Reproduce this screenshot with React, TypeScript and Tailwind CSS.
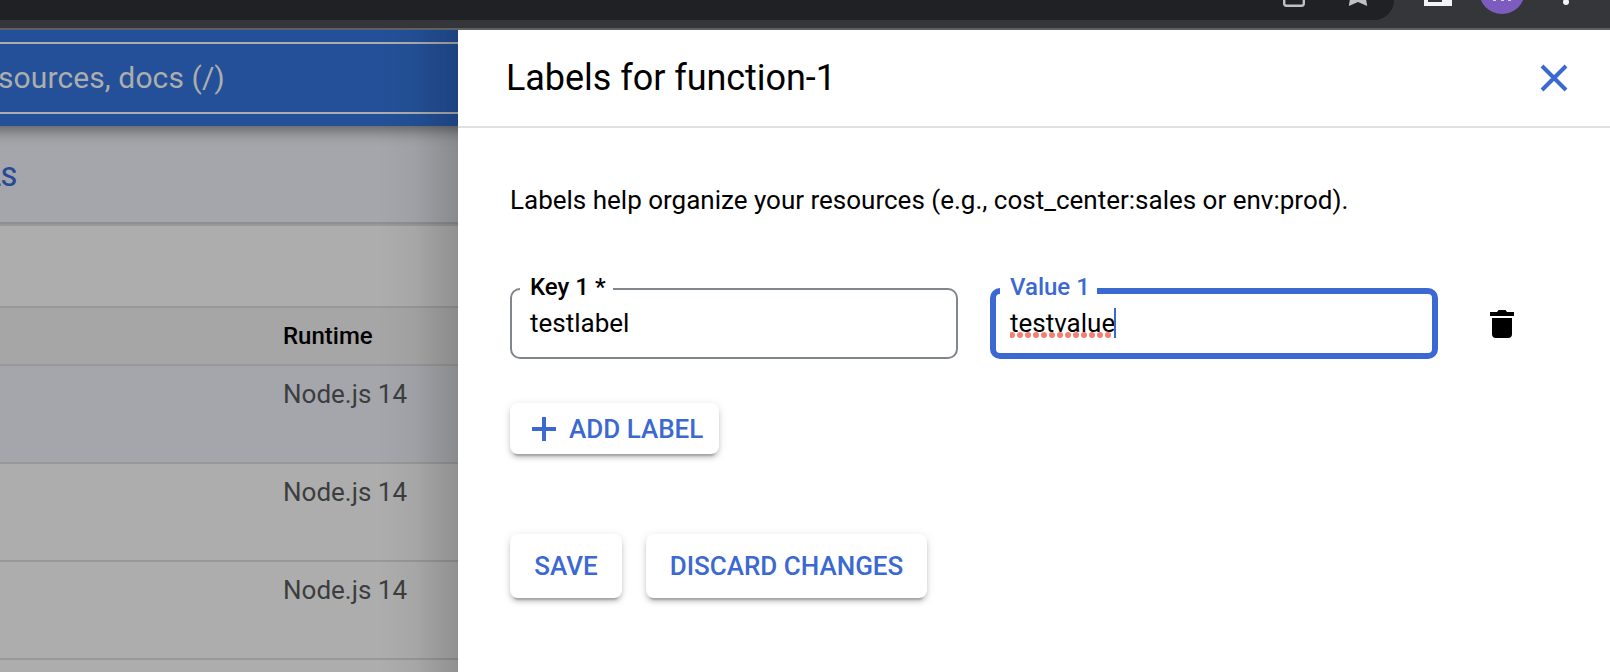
function BrowserBar() {
  return (
    <div className="flex h-[30px] shrink-0 border-b-2 border-[#5f6064] bg-[#35363a]">
      <div className="flex h-5 w-[1394px] rounded-br-[26px] bg-[#202124]" />
      <svg className="absolute left-[1270px] top-0" width="340" height="28" viewBox="1270 0 340 28">
        <path d="M1284.2 -4V3.5q0 2.2 2.2 2.2h15.2q2.2 0 2.2-2.2V-4" fill="none" stroke="#bdc1c6" strokeWidth="2.4" />
        <path d="M1350.5 -4L1348.8 6L1358 2L1367.2 6L1365.5 -4Z" fill="#bdc1c6" />
        <path d="M1424 0H1452V6H1424Z" fill="#f1f3f4" />
        <path d="M1428 0H1442V2H1428Z" fill="#35363a" />
        <circle cx="1502" cy="-9" r="23" fill="#7c5cbf" />
        <path d="M1493 0h3v1h-3zM1501 0h3v1h-3zM1508 0h3v1h-3z" fill="#d9cdee" />
        <circle cx="1566" cy="2" r="3" fill="#f1f3f4" />
      </svg>
    </div>
  );
}

function RuntimeRow({ selected }: { selected?: boolean }) {
  return (
    <div className={`h-[98px] shrink-0 border-b-2 border-[#989898] pl-[283px] pt-[10px] text-[26px] leading-[36px] text-[#3c3d3e] ${selected ? "bg-[#a4a6ab]" : "bg-[#adadad]"}`}>
      Node.js 14
    </div>
  );
}

function Background() {
  return (
    <div className="relative flex w-[458px] shrink-0 flex-col overflow-hidden whitespace-nowrap bg-[#adadad]">
      <div className="relative -mx-6 h-24 shrink-0 bg-[#235098] py-3 shadow-[0_0_14px_4px_rgba(0,0,0,0.45)]">
        <div className="flex h-[72px] items-center border-y-2 border-[#adadad]">
          <span className="ml-[22px] pb-[2px] text-[30px] tracking-[0.1px] text-[#adadad]">sources, docs (/)</span>
        </div>
      </div>
      <div className="flex h-24 shrink-0 items-center bg-[#a4a6ab]">
        <span className="-ml-[13px] pt-[6px] text-[26px] font-medium text-[#284a94]">LS</span>
      </div>
      <div className="h-1 shrink-0 border-t-2 border-[#8e8f93] bg-[#989898]" />
      <div className="h-[82px] shrink-0 border-b-2 border-[#989898]" />
      <div className="h-[58px] shrink-0 border-b-2 border-[#989898] bg-[#a6a6a6] pl-[283px] text-[24px] font-medium leading-[56px] text-black">Runtime</div>
      <RuntimeRow selected />
      <RuntimeRow />
      <RuntimeRow />
      <div className="absolute inset-y-0 right-0 w-20 bg-[linear-gradient(to_right,transparent,rgba(0,0,0,0.035)_45%,rgba(0,0,0,0.17))]" />
    </div>
  );
}

function Field({ label, value, focused }: { label: string; value: string; focused?: boolean }) {
  return (
    <div
      className={`relative h-[71px] w-[448px] rounded-[10px] ${focused ? "border-[6px] border-[#3c69d1] pl-[14px] pt-[9px]" : "border-2 border-[#80868b] pl-[18px] pt-[13px]"}`}
    >
      <span
        className={`absolute bg-white text-[24px] font-medium leading-[28px] ${focused ? "-top-[21px] left-1 w-[97px] pl-[10px] text-[#3c69d1]" : "-top-[17px] left-2 w-[93px] pl-[10px] text-black"}`}
      >
        {label}
      </span>
      <div className="relative flex h-[40px] items-center text-[26px] leading-[40px] text-black">
        {focused && (
          <svg className="absolute left-0 top-[29px]" width="104" height="6" viewBox="0 0 104 6">
            <path d="M2 3H104" stroke="#f28072" strokeWidth="6" strokeLinecap="round" strokeDasharray="0 8" />
          </svg>
        )}
        <span className="relative">{value}</span>
        {focused && <span className="relative -ml-px h-[30px] w-[2px] bg-[#3c69d1]" />}
      </div>
    </div>
  );
}

const buttonClass =
  "flex items-center rounded-lg bg-white text-[26px] font-medium text-[#3c69d1] shadow-[0_6px_2px_-4px_rgba(0,0,0,0.2),0_4px_4px_rgba(0,0,0,0.14),0_2px_10px_rgba(0,0,0,0.12)]";

function Panel() {
  return (
    <div className="flex grow flex-col bg-white">
      <div className="flex h-[98px] items-center justify-between border-b-2 border-[#e0e0e0] pl-12 pr-[42px]">
        <h1 className="text-[36px] tracking-[-0.05px] text-black">Labels for function-1</h1>
        <svg width="28" height="28" viewBox="0 0 28 28">
          <path d="M2 2L26 26M26 2L2 26" stroke="#3c69d1" strokeWidth="4" />
        </svg>
      </div>
      <div className="px-[52px] pt-[52px]">
        <p className="text-[26px] leading-[40px] text-black">
          Labels help organize your resources (e.g., cost_center:sales or env:prod).
        </p>
        <div className="mt-[68px] flex items-center">
          <Field label="Key 1 *" value="testlabel" />
          <div className="w-8" />
          <Field label="Value 1" value="testvalue" focused />
          <svg className="ml-[52px]" width="24" height="28" viewBox="0 0 24 28">
            <path d="M0 2H7L8.5 0H15.5L17 2H24V6H0ZM2 8H22V24Q22 28 18 28H6Q2 28 2 24Z" fill="#000" />
          </svg>
        </div>
        <button className={`${buttonClass} mt-11 h-[51px] w-[209px] pl-[22px]`}>
          <svg width="24" height="24" viewBox="0 0 24 24">
            <path d="M12 0V24M0 12H24" stroke="#3c69d1" strokeWidth="4" />
          </svg>
          <span className="ml-[13px] whitespace-nowrap pt-[2px]">ADD LABEL</span>
        </button>
        <div className="mt-20 flex gap-6">
          <button className={`${buttonClass} h-16 w-[112px] justify-center`}>SAVE</button>
          <button className={`${buttonClass} h-16 w-[281px] justify-center whitespace-nowrap`}>DISCARD CHANGES</button>
        </div>
      </div>
    </div>
  );
}

export default function App() {
  return (
    <div className="flex h-[672px] w-[1610px] flex-col overflow-hidden font-['Roboto',sans-serif]">
      <BrowserBar />
      <div className="flex h-[642px]">
        <Background />
        <Panel />
      </div>
    </div>
  );
}
